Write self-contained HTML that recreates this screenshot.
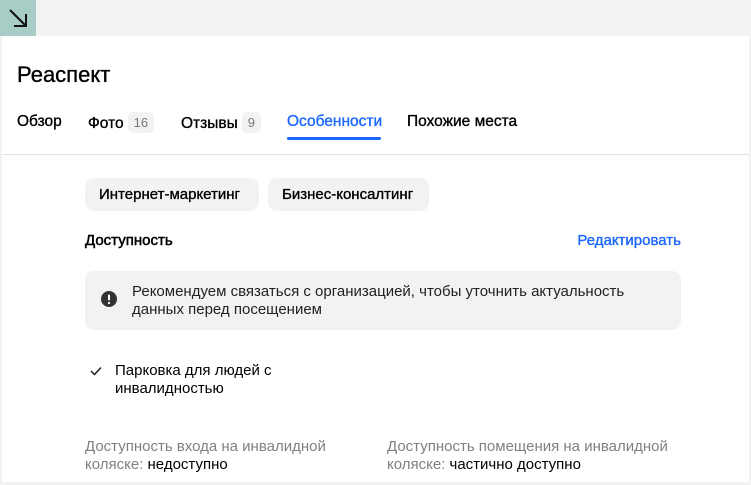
<!DOCTYPE html><html><head><meta charset="utf-8"><style>
body{margin:0;width:751px;height:485px;background:#f2f2f2;font-family:"Liberation Sans",sans-serif;position:relative;overflow:hidden;color:#000}
.a{position:absolute;white-space:nowrap}
.m{-webkit-text-stroke:0.35px currentColor}
.panel{position:absolute;left:2px;top:36px;width:747px;height:446px;background:#fff}
.chip{position:absolute;top:178px;height:33px;background:#f2f2f2;border-radius:9px;font-size:15px;line-height:33px;padding:0 14px;box-sizing:border-box;white-space:nowrap}
.cnt{display:inline-block;background:#f2f2f2;color:#777;font-size:13px;border-radius:5px;padding:0 6px;line-height:21px;margin-left:4px;vertical-align:1px;-webkit-text-stroke:0}
.tab{font-size:15.5px;top:112px;line-height:20px}
.g{color:#808080}
</style></head><body>
<div class="a" style="left:0;top:0;width:36px;height:36px;background:#a8cdc6">
<svg width="36" height="36"><path d="M10 10L26 26M14 26H26V14" stroke="#111" stroke-width="2" fill="none"/></svg></div>
<div class="panel"></div>
<div class="a m" style="left:17px;top:62px;font-size:22px">Реаспект</div>
<div class="a tab m" style="left:17px">Обзор</div>
<div class="a tab m" style="left:88px">Фото<span class="cnt">16</span></div>
<div class="a tab m" style="left:181px">Отзывы<span class="cnt">9</span></div>
<div class="a tab m" style="left:287px;color:#1a66ff">Особенности</div>
<div class="a" style="left:287px;top:137px;width:94px;height:3px;background:#1a66ff;border-radius:2px"></div>
<div class="a tab m" style="left:407px">Похожие места</div>
<div class="a" style="left:2px;top:154px;width:747px;height:1px;background:#e3e3e3"></div>
<div class="chip m" style="left:85px;width:174px">Интернет-маркетинг</div>
<div class="chip m" style="left:268px;width:161px">Бизнес-консалтинг</div>
<div class="a m" style="left:85px;top:232px;font-size:15px;-webkit-text-stroke:0.5px #000">Доступность</div>
<div class="a m" style="right:70px;top:232px;font-size:15px;color:#1a66ff">Редактировать</div>
<div class="a" style="left:85px;top:271px;width:596px;height:59px;background:#f2f2f2;border-radius:9px"></div>
<svg class="a" style="left:101px;top:291px" width="16" height="16"><circle cx="8" cy="8" r="8" fill="#333"/><rect x="7" y="3.5" width="2" height="6" rx="1" fill="#fff"/><circle cx="8" cy="12" r="1.1" fill="#fff"/></svg>
<div class="a" style="left:132px;top:283px;font-size:15px;line-height:18px;color:#222">Рекомендуем связаться с организацией, чтобы уточнить актуальность<br>данных перед посещением</div>
<svg class="a" style="left:89px;top:365px" width="14" height="12"><path d="M2 6L5.5 9.5L12 2.5" stroke="#222" stroke-width="1.5" fill="none"/></svg>
<div class="a" style="left:115px;top:362px;font-size:15px;line-height:18px">Парковка для людей с<br>инвалидностью</div>
<div class="a" style="left:85px;top:438px;font-size:15px;line-height:18px"><span class="g">Доступность входа на инвалидной<br>коляске:</span> недоступно</div>
<div class="a" style="left:387px;top:438px;font-size:15px;line-height:18px"><span class="g">Доступность помещения на инвалидной<br>коляске:</span> частично доступно</div>
</body></html>
